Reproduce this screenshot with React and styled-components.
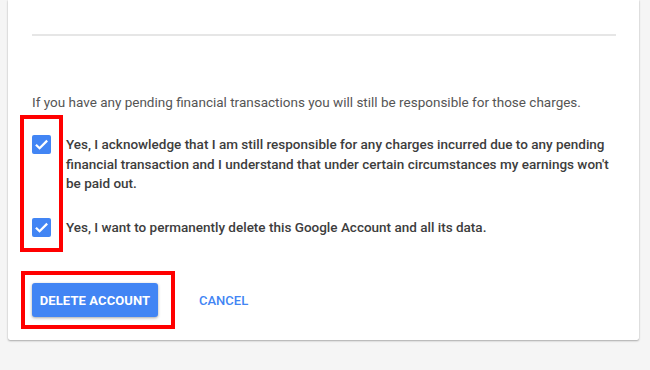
import React from 'react'
import styled, { createGlobalStyle } from 'styled-components'

const GlobalStyle = createGlobalStyle`
    html, body {
        margin: 0;
        padding: 0;
        background-color: #f5f5f5;
        font-family: Roboto, "Liberation Sans", Arial, sans-serif;
    }
`

const Page = styled.div`
    width: 650px;
    height: 370px;
    overflow: hidden;
    padding-left: 8px;
    box-sizing: border-box;
`

const Card = styled.div`
    width: 631px;
    box-sizing: border-box;
    background-color: #fff;
    padding: 34px 23px 23px 24px;
    border-radius: 0 0 2px 2px;
    box-shadow: 0 1px 2px rgba(0, 0, 0, 0.3), 0 0 1px rgba(0, 0, 0, 0.18);
`

const Divider = styled.hr`
    margin: 0;
    border: none;
    height: 2px;
    background-color: #e6e6e6;
`

const Notice = styled.p`
    margin: 57px 0 0;
    font-size: 13.5px;
    line-height: 19px;
    color: #555;
`

const ConfirmList = styled.div`
    position: relative;
    display: flex;
    flex-direction: column;
    gap: 24px;
    margin-top: 23px;
`

const ConfirmRow = styled.label`
    display: flex;
    align-items: flex-start;
    gap: 15px;
`

const Box = styled.span`
    flex: none;
    width: 19px;
    height: 19px;
    border-radius: 2px;
    background-color: #4285f4;
    display: flex;
    align-items: center;
    justify-content: center;
`

const ConfirmText = styled.span`
    font-size: 13.5px;
    line-height: 19.5px;
    font-weight: 500;
    color: #3d3d3d;
    max-width: 545px;
`

const Highlight = styled.div`
    position: absolute;
    border: 4px solid #ff0000;
    box-sizing: border-box;
    pointer-events: none;
    top: ${p => p.top}px;
    left: ${p => p.left}px;
    width: ${p => p.width}px;
    height: ${p => p.height}px;
`

const Actions = styled.div`
    position: relative;
    display: flex;
    align-items: center;
    gap: 40px;
    margin-top: 46px;
`

const PrimaryButton = styled.button`
    height: 34px;
    width: 126px;
    border: none;
    border-radius: 3px;
    background-color: #4285f4;
    color: #fff;
    font-family: inherit;
    font-size: 13px;
    font-weight: 700;
    letter-spacing: 0.1px;
    box-shadow: 0 1px 3px rgba(0, 0, 0, 0.35);
    padding: 0;
`

const TextButton = styled.button`
    border: none;
    background: none;
    padding: 0 0 0 1px;
    color: #4285f4;
    font-family: inherit;
    font-size: 13px;
    font-weight: 500;
`

const Check = () => (
    <svg width="15" height="15" viewBox="0 0 14 14">
        <path d="M1.8 7.2l3.4 3.3L12.3 3.4" fill="none" stroke="#fff" strokeWidth="2.1" />
    </svg>
)

const confirmations = [
    "Yes, I acknowledge that I am still responsible for any charges incurred due to any pending financial transaction and I understand that under certain circumstances my earnings won't be paid out.",
    'Yes, I want to permanently delete this Google Account and all its data.'
]

class App extends React.Component {
    render() {
        return (
            <Page>
                <GlobalStyle />
                <Card>
                    <Divider />
                    <Notice>If you have any pending financial transactions you will still be responsible for those charges.</Notice>
                    <ConfirmList>
                        {
                            confirmations.map((text, index) => (
                                <ConfirmRow key={index}>
                                    <Box><Check /></Box>
                                    <ConfirmText>{text}</ConfirmText>
                                </ConfirmRow>
                            ))
                        }
                        <Highlight top={-20} left={-12} width={43} height={137} />
                    </ConfirmList>
                    <Actions>
                        <PrimaryButton>DELETE ACCOUNT</PrimaryButton>
                        <TextButton>CANCEL</TextButton>
                        <Highlight top={-12} left={-11} width={154} height={58} />
                    </Actions>
                </Card>
            </Page>
        )
    }
}

export default App
